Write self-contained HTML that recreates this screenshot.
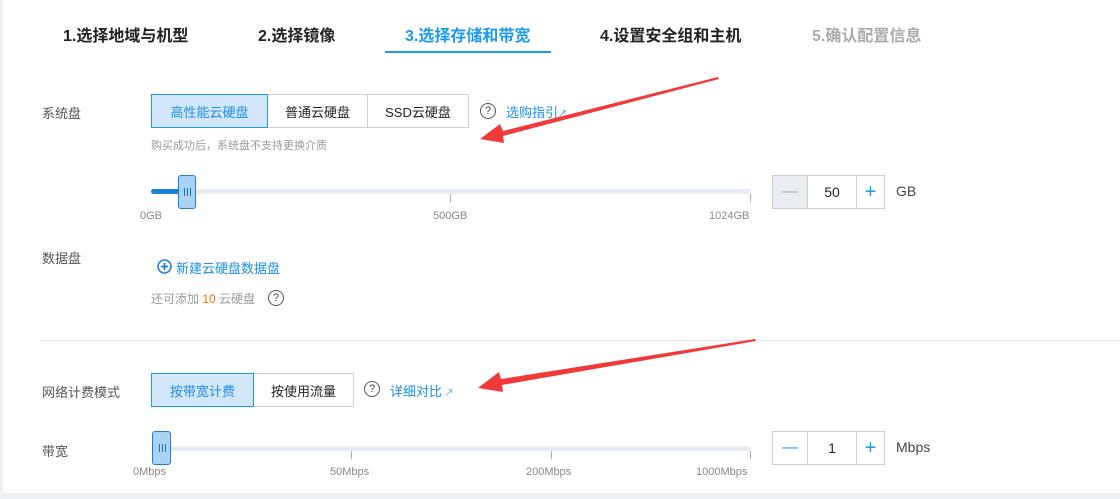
<!DOCTYPE html>
<html><head><meta charset="utf-8">
<style>
*{margin:0;padding:0;box-sizing:border-box}
body{width:1120px;height:499px;background:#fff;position:relative;overflow:hidden;font-family:"Liberation Sans","Noto Sans CJK SC",sans-serif;font-size:13px;color:#333}
.a{position:absolute;white-space:nowrap}
.tab{font-size:16px;font-weight:bold;color:#222;top:22px}
.lbl{color:#555;font-size:13px}
.btn{position:absolute;height:34px;border:1px solid #ccd0d6;background:#fff;display:flex;align-items:center;justify-content:center;font-size:13px;color:#222}
.btn.on{background:#d4e7fa;border-color:#1a9bf0;color:#1a8fe6;z-index:2}
.q{position:absolute;width:16px;height:16px;border:1.3px solid #555;border-radius:50%;font-size:11px;line-height:14px;text-align:center;color:#444}
.link{color:#1a8fe6}
.track{position:absolute;height:5px;background:#e8edf3;border-radius:3px}
.tick{position:absolute;width:1px;height:8px;background:#aaa}
.sl{font-size:11px;color:#888}
.thumb{position:absolute;background:#a9d4f7;border:1px solid #1a80d8;border-radius:3px}
.thumb i{position:absolute;top:50%;left:50%;width:7px;height:8px;margin:-4px 0 0 -3px;border-left:1px solid #1a6fbd;border-right:1px solid #1a6fbd}
.thumb i:after{content:"";position:absolute;left:2px;top:0;width:1px;height:8px;background:#1a6fbd}
.num{position:absolute;height:34px;border:1px solid #ccd0d6;display:flex}
.num div{display:flex;align-items:center;justify-content:center;height:100%}
</style></head><body>
<div class="a" style="left:0;top:0;width:3px;height:499px;background:#eef1f4"></div>
<div class="a" style="left:0;top:493px;width:1120px;height:6px;background:#eef1f4"></div>

<div class="a tab" style="left:63px">1.选择地域与机型</div>
<div class="a tab" style="left:258px">2.选择镜像</div>
<div class="a tab" style="left:405px;color:#1a9bf0">3.选择存储和带宽</div>
<div class="a" style="left:385px;top:51px;width:166px;height:2px;background:#1a9bf0"></div>
<div class="a tab" style="left:600px">4.设置安全组和主机</div>
<div class="a tab" style="left:812px;color:#aaa">5.确认配置信息</div>

<div class="a lbl" style="left:42px;top:103px">系统盘</div>
<div class="btn on" style="left:151px;top:94px;width:117px">高性能云硬盘</div>
<div class="btn" style="left:267px;top:94px;width:101px">普通云硬盘</div>
<div class="btn" style="left:367px;top:94px;width:102px">SSD云硬盘</div>
<div class="q" style="left:480px;top:103px">?</div>
<div class="a link" style="left:506px;top:102px">选购指引<span style="font-size:9px">↗</span></div>
<div class="a" style="left:151px;top:137px;font-size:11px;color:#999">购买成功后，系统盘不支持更换介质</div>

<div class="track" style="left:151px;top:189px;width:600px"></div>
<div class="track" style="left:151px;top:189px;width:30px;background:#1a80d8"></div>
<div class="tick" style="left:450px;top:194px"></div>
<div class="tick" style="left:750px;top:194px"></div>
<div class="thumb" style="left:178px;top:175px;width:18px;height:34px"><i></i></div>
<div class="a sl" style="left:140px;top:210px">0GB</div>
<div class="a sl" style="left:433px;top:210px">500GB</div>
<div class="a sl" style="left:709px;top:210px">1024GB</div>

<div class="num" style="left:772px;top:175px;width:113px">
<div style="width:35px;background:#e9edf2;border-right:1px solid #ccd0d6;color:#aaa;font-size:16px">—</div>
<div style="width:49px;border-right:1px solid #ccd0d6;font-size:14px;color:#222">50</div>
<div style="width:27px;color:#1a9bf0;font-size:20px;font-weight:300">+</div></div>
<div class="a" style="left:896px;top:183px;font-size:14px;color:#444">GB</div>

<div class="a lbl" style="left:42px;top:248px">数据盘</div>
<svg class="a" style="left:157px;top:259px" width="15" height="15"><circle cx="7.5" cy="7.5" r="6.5" fill="none" stroke="#1a80d8" stroke-width="1.6"/><path d="M7.5 4v7M4 7.5h7" stroke="#1a80d8" stroke-width="1.8"/></svg>
<div class="a link" style="left:176px;top:258px">新建云硬盘数据盘</div>
<div class="a" style="left:151px;top:290px;font-size:12px;color:#999">还可添加 <span style="color:#f56a00">10</span> 云硬盘</div>
<div class="q" style="left:268px;top:290px">?</div>

<div class="a" style="left:42px;top:340px;width:1078px;height:1px;background:#e6e8ec"></div>

<div class="a lbl" style="left:42px;top:382px">网络计费模式</div>
<div class="btn on" style="left:151px;top:373px;width:103px">按带宽计费</div>
<div class="btn" style="left:253px;top:373px;width:101px">按使用流量</div>
<div class="q" style="left:364px;top:381px">?</div>
<div class="a link" style="left:390px;top:381px">详细对比<span style="font-size:9px"> ↗</span></div>

<div class="a lbl" style="left:42px;top:441px">带宽</div>
<div class="track" style="left:151px;top:446px;width:600px"></div>
<div class="tick" style="left:351px;top:451px"></div>
<div class="tick" style="left:551px;top:451px"></div>
<div class="tick" style="left:750px;top:451px"></div>
<div class="thumb" style="left:152px;top:431px;width:19px;height:34px"><i></i></div>
<div class="a sl" style="left:133px;top:466px">0Mbps</div>
<div class="a sl" style="left:330px;top:466px">50Mbps</div>
<div class="a sl" style="left:526px;top:466px">200Mbps</div>
<div class="a sl" style="left:696px;top:466px">1000Mbps</div>

<div class="num" style="left:772px;top:431px;width:113px">
<div style="width:35px;border-right:1px solid #ccd0d6;color:#1a9bf0;font-size:16px">—</div>
<div style="width:49px;border-right:1px solid #ccd0d6;font-size:14px;color:#222">1</div>
<div style="width:27px;color:#1a9bf0;font-size:20px;font-weight:300">+</div></div>
<div class="a" style="left:896px;top:439px;font-size:14px;color:#444">Mbps</div>

<svg class="a" style="left:0;top:0" width="1120" height="499">
<polygon points="718,77 503,131 500,124 480,139 504,143 503,136 719,79" fill="#f03a3a"/>
<polygon points="755,339 501,379 499,372 478,388 503,392 502,385 756,341" fill="#f03a3a"/>
</svg>
</body></html>
